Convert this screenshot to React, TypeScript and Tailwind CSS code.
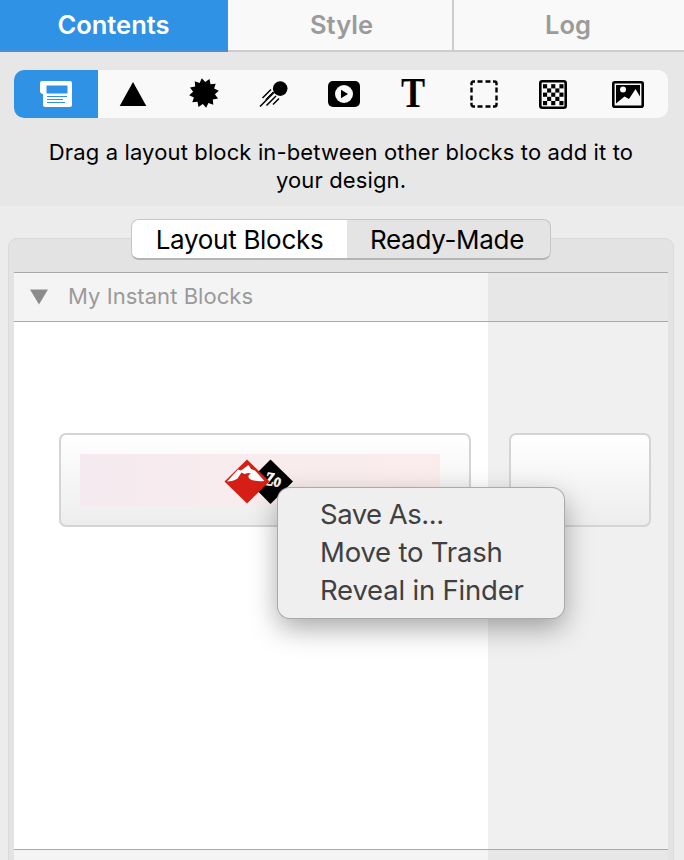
import React, { useState } from 'react';

const tabs = [
  { name: 'Contents', width: 'w-[228px]' },
  { name: 'Style', width: 'w-[226px] pl-[3px]' },
  { name: 'Log', width: 'w-[230px] pr-[2px]' },
];

const starPoints = Array.from({ length: 24 }, (_, i) => {
  const r = i % 2 === 0 ? 15 : 11;
  const a = (i * Math.PI) / 12 - 1.72;
  return `${(15 + r * Math.cos(a)).toFixed(1)},${(15 + r * Math.sin(a)).toFixed(1)}`;
}).join(' ');

const LayoutIcon = () => (
  <svg width="32" height="26" viewBox="0 0 32 26">
    <path d="M2 0H30Q32 0 32 2V24Q32 26 30 26H5Q3 26 3 24V13Q0 12.500 0 10V2Q0 0 2 0Z" fill="#fff" />
    <rect x="6.500" y="4.500" width="21" height="8" fill="#2f92e4" />
    <path d="M7 15.500H27M7 18.500H23M7 21.500H25" stroke="#2f92e4" strokeWidth="1" />
  </svg>
);

const TriangleIcon = () => (
  <svg width="28" height="24" viewBox="0 0 28 24">
    <path d="M14 0L27.300 24H.7Z" />
  </svg>
);

const StarIcon = () => (
  <svg width="30" height="30" viewBox="0 0 30 30" className="relative left-px top-[-1px]">
    <polygon points={starPoints} />
  </svg>
);

const CometIcon = () => (
  <svg width="29" height="26" viewBox="0 0 29 26">
    <circle cx="21.200" cy="7.600" r="7.300" />
    <path d="M3.500 17L12 8.500M1 25.500L15.500 11M7.500 24.500L17 15M14 23.500L20 17.500" stroke="#000" strokeWidth="1.500" fill="none" />
    <path d="M6.500 18.500L14 11" stroke="#000" strokeWidth="1" />
  </svg>
);

const VideoIcon = () => (
  <svg width="32" height="26" viewBox="0 0 32 26" className="relative left-px">
    <rect width="32" height="26" rx="5" />
    <circle cx="16" cy="13" r="9" fill="#f9f9f9" />
    <path d="M13 8.800V17.200L20 13Z" />
  </svg>
);

const MarqueeIcon = () => (
  <svg width="28" height="28" viewBox="0 0 28 28" fill="none" stroke="#000" strokeWidth="2.400" className="relative left-px">
    <path d="M1.500 5.200V3.500Q1.500 1.500 3.500 1.500H5M23 1.500H24.500Q26.500 1.500 26.500 3.500V5.200M26.500 22.800V24.500Q26.500 26.500 24.500 26.500H23M5 26.500H3.500Q1.500 26.500 1.500 24.500V22.800" />
    <path d="M7.500 1.500H12.500M15.500 1.500H20.500M7.500 26.500H12.500M15.500 26.500H20.500M1.500 7.500V12.500M1.500 15.500V20.500M26.500 7.500V12.500M26.500 15.500V20.500" />
  </svg>
);

const CheckerIcon = () => (
  <svg width="28" height="29" viewBox="0 0 28 29">
    <rect x="1.300" y="1.300" width="25.400" height="26.400" rx="2" fill="none" stroke="#000" strokeWidth="2.600" />
    {[0, 1, 2, 3, 4].map(row =>
      [0, 1, 2, 3, 4].map(col =>
        (row + col) % 2 === 0 ? (
          <rect key={`${row}-${col}`} x={4 + col * 4.1} y={4.2 + row * 4.2} width="4.100" height="4.200" />
        ) : null
      )
    )}
  </svg>
);

const ImageIcon = () => (
  <svg width="32" height="27" viewBox="0 0 32 27">
    <rect x="1.300" y="1.300" width="29.400" height="24.400" rx="1.500" fill="none" stroke="#000" strokeWidth="2.600" />
    <path d="M4 4H28V15.500L23.500 8L17 18L12.500 15.500L4 22.500Z" />
    <circle cx="11" cy="8.500" r="3" fill="#f9f9f9" />
  </svg>
);

const TextIcon = () => (
  <span className="relative left-[0.500px] top-[-1px] scale-x-[0.86] font-['Liberation_Serif',serif] text-[42px] leading-none font-bold">T</span>
);

const tools = [
  { name: 'layouts', icon: <LayoutIcon />, width: 'w-[84px]' },
  { name: 'shapes', icon: <TriangleIcon />, width: 'w-[70px]' },
  { name: 'badges', icon: <StarIcon />, width: 'w-[70px]' },
  { name: 'effects', icon: <CometIcon />, width: 'w-[70px]' },
  { name: 'video', icon: <VideoIcon />, width: 'w-[70px]' },
  { name: 'text', icon: <TextIcon />, width: 'w-[70px]' },
  { name: 'placeholder', icon: <MarqueeIcon />, width: 'w-[70px]' },
  { name: 'patterns', icon: <CheckerIcon />, width: 'w-[70px]' },
  { name: 'images', icon: <ImageIcon />, width: 'w-[80px]' },
];

const Logo = () => (
  <svg width="70" height="46" viewBox="0 0 70 46" className="relative left-[-1px] top-[2px]">
    <path d="M46.500 .5L69 22.500L46.500 45L24.500 22.500Z" />
    <text x="41" y="27" fontSize="19" fontStyle="italic" fontWeight="700" fill="#fff" stroke="#fff" strokeWidth=".6" fontFamily="Liberation Serif, serif" transform="rotate(8 49 23)" textLength="16" lengthAdjust="spacingAndGlyphs">Zo</text>
    <path d="M23 .5L45.500 22.500L23 44.500L.5 22.500Z" fill="#d51f16" />
    <path d="M3 22.500L14 10.500L17 11.500L24.500 6L27 10L31 11.500L40.500 22C35 22.500 29 22 26 20C23.500 18 24 16 27 14.500L24 14L20.500 15L17.500 13.500L13.500 19.500C11 21.500 7 22.500 3 22.500Z" fill="#fff" />
  </svg>
);

const App: React.FC = () => {
  const [activeTab, setActiveTab] = useState('Contents');
  const [tool, setTool] = useState('layouts');
  const [mode, setMode] = useState('Layout Blocks');

  return (
    <div className="flex h-[860px] w-[684px] flex-col overflow-hidden bg-[#ececec] font-['Inter',sans-serif] text-black">
      <div className="h-[206px] shrink-0 bg-[#e7e7e7]">
        {/* tabs */}
        <div className="flex h-[52px] text-[25.500px] font-semibold">
          {tabs.map(tab => (
            <button
              key={tab.name}
              onClick={() => setActiveTab(tab.name)}
              className={`h-[52px] border-b-2 ${tab.width} ${
                activeTab === tab.name
                  ? 'border-r border-[#4a8fd0] bg-[#2f92e4] text-white'
                  : 'border-r-2 border-[#cdcdcd] bg-[#f9f9f9] text-[#9b9b9b] last:border-r-0'
              }`}
            >
              {tab.name}
            </button>
          ))}
        </div>

        <div className="mt-[18px] ml-[14px] flex h-12 w-[654px] overflow-hidden rounded-[10px] bg-[#f9f9f9]">
          {tools.map(t => (
            <button
              key={t.name}
              onClick={() => setTool(t.name)}
              className={`flex items-center justify-center ${t.width} ${tool === t.name ? 'bg-[#2f92e4]' : ''}`}
            >
              {t.icon}
            </button>
          ))}
        </div>

        <p className="mx-auto mt-[20px] w-[620px] pr-[2px] text-center text-[22px] leading-7 tracking-[0.130px]">
          Drag a layout block in-between other blocks to add it to
          <br />
          your design.
        </p>
      </div>

      <div className="relative mx-2 mt-8 h-[640px] w-[666px] shrink-0 rounded-[9px] border border-[#dadada] bg-[#e3e3e3]">
        {/* segmented control */}
        <div className="mt-[-20px] ml-[122px] flex h-[41px] w-[420px] overflow-hidden rounded-lg border border-b-2 border-[#c6c6c6] border-b-[#b4b4b4] bg-[#e4e4e4] text-[26px] tracking-[-0.300px]">
          {['Layout Blocks', 'Ready-Made'].map(label => (
            <button
              key={label}
              onClick={() => setMode(label)}
              className={`pb-1 first:w-[215px] last:w-[203px] last:pr-[3px] ${mode === label ? 'bg-white' : ''}`}
            >
              {label}
            </button>
          ))}
        </div>

        <div className="mt-3 ml-[5px] w-[654px]">
          <div className="flex h-[50px] border-y border-[#a9a9a9] bg-[#e7e7e7]">
            <div className="flex w-[474px] items-center bg-[#f4f4f4] pl-4 text-[22px] text-[#9a9a9a]">
              <svg width="18" height="16" viewBox="0 0 18 16">
                <path d="M0 .5H18L9 15.500Z" fill="#8b8b8b" />
              </svg>
              <span className="ml-5 pb-[2px] tracking-[0.050px]">My Instant Blocks</span>
            </div>
          </div>

          <div className="flex h-[527px] bg-[#f0f0f0]">
            <div className="w-[474px] bg-white pt-[111px] pl-[45px]">
              <div className="flex h-[94px] w-[412px] rounded-[7px] border-2 border-[#d4d4d4] bg-linear-to-b from-white to-[#ededed] pt-[19px] pl-[19px]">
                <div className="flex h-[52px] w-[360px] items-center justify-center bg-linear-to-r from-[#f5eaef] via-[#f8ecee] to-[#fbecec]">
                  <Logo />
                </div>
              </div>
            </div>
            <div className="pt-[111px] pl-[21px]">
              <div className="h-[94px] w-[142px] rounded-[7px] border-2 border-[#d4d4d4] bg-linear-to-b from-white to-[#ededed]" />
            </div>
          </div>

          <div className="flex h-[50px] border-y border-[#a9a9a9] bg-[#e7e7e7]">
            <div className="w-[474px] bg-[#f4f4f4]" />
          </div>
        </div>

        {/* context menu */}
        <div className="absolute top-[249px] left-[269px] flex h-[130px] w-[286px] flex-col rounded-xl bg-[#efefef] pt-[7px] pl-[42px] text-[27.500px] leading-[38px] tracking-[-0.200px] text-[#404040] shadow-[0_0_0_1px_#aaa,0_10px_28px_rgba(0,0,0,0.35)]">
          <span className="tracking-[-0.500px]">Save As...</span>
          <span>Move to Trash</span>
          <span>Reveal in Finder</span>
        </div>
      </div>
    </div>
  );
};

export default App;
